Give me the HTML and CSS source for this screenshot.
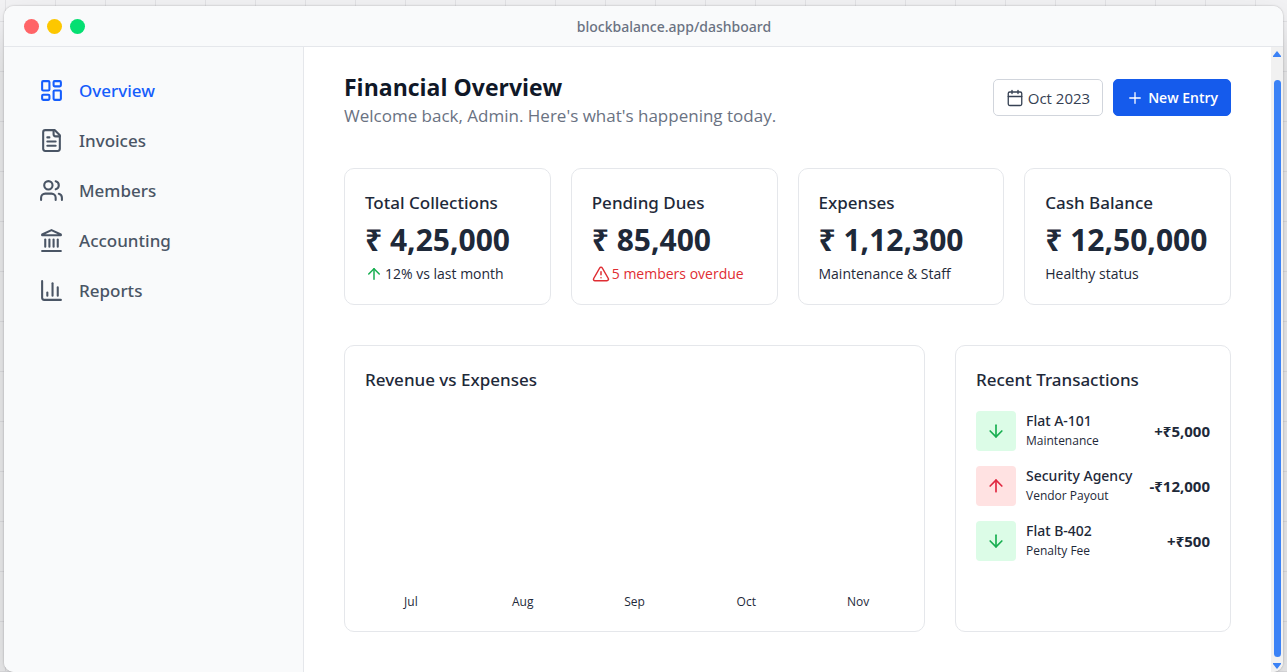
FILE: index.html
```html
<!DOCTYPE html>
<html lang="en">
<head>
  <meta charset="UTF-8">
  <title>BlockBalance - Dashboard</title>
  <meta name="viewport" content="width=device-width, initial-scale=1.0">
  <link rel="stylesheet" href="styles.css">
</head>
<body>

  <div class="window">
    <header class="titlebar">
      <div class="dots">
        <span class="dot red"></span>
        <span class="dot yellow"></span>
        <span class="dot green"></span>
      </div>
      <span class="url">blockbalance.app/dashboard</span>
    </header>

    <div class="app">
      <nav class="sidebar">
        <a href="#" class="active">
          <svg class="icon" viewBox="0 0 24 24"><rect x="3" y="3" width="7" height="9" rx="1"/><rect x="14" y="3" width="7" height="5" rx="1"/><rect x="14" y="12" width="7" height="9" rx="1"/><rect x="3" y="16" width="7" height="5" rx="1"/></svg>
          Overview
        </a>
        <a href="#">
          <svg class="icon" viewBox="0 0 24 24"><path d="M15 2H6a2 2 0 0 0-2 2v16a2 2 0 0 0 2 2h12a2 2 0 0 0 2-2V7Z"/><path d="M14 2v4a2 2 0 0 0 2 2h4"/><path d="M10 9H8"/><path d="M16 13H8"/><path d="M16 17H8"/></svg>
          Invoices
        </a>
        <a href="#">
          <svg class="icon" viewBox="0 0 24 24"><path d="M16 21v-2a4 4 0 0 0-4-4H6a4 4 0 0 0-4 4v2"/><circle cx="9" cy="7" r="4"/><path d="M22 21v-2a4 4 0 0 0-3-3.87"/><path d="M16 3.13a4 4 0 0 1 0 7.75"/></svg>
          Members
        </a>
        <a href="#">
          <svg class="icon" viewBox="0 0 24 24"><path d="M3 22h18"/><path d="M6 18v-7"/><path d="M10 18v-7"/><path d="M14 18v-7"/><path d="M18 18v-7"/><path d="M12 2 3 6.2V7h18v-.8Z"/></svg>
          Accounting
        </a>
        <a href="#">
          <svg class="icon" viewBox="0 0 24 24"><path d="M3 3v16a2 2 0 0 0 2 2h16"/><path d="M18 17V9"/><path d="M13 17V5"/><path d="M8 17v-3"/></svg>
          Reports
        </a>
      </nav>

      <main class="content">
        <div class="page-head">
          <div>
            <h1>Financial Overview</h1>
            <p>Welcome back, Admin. Here's what's happening today.</p>
          </div>
          <div class="actions">
            <button type="button" class="btn">
              <svg class="icon" viewBox="0 0 24 24"><path d="M8 2v4"/><path d="M16 2v4"/><rect x="3" y="4" width="18" height="18" rx="2"/><path d="M3 10h18"/></svg>
              Oct 2023
            </button>
            <button type="button" class="btn primary">
              <svg class="icon" viewBox="0 0 24 24"><path d="M5 12h14"/><path d="M12 5v14"/></svg>
              New Entry
            </button>
          </div>
        </div>

        <section class="stats">
          <div class="card stat">
            <h3>Total Collections</h3>
            <div class="amount">₹ 4,25,000</div>
            <p><svg class="icon up" viewBox="0 0 24 24"><path d="m5 12 7-7 7 7"/><path d="M12 19V5"/></svg>12% vs last month</p>
          </div>
          <div class="card stat">
            <h3>Pending Dues</h3>
            <div class="amount">₹ 85,400</div>
            <p class="overdue"><svg class="icon" viewBox="0 0 24 24"><path d="m21.73 18-8-14a2 2 0 0 0-3.48 0l-8 14A2 2 0 0 0 4 21h16a2 2 0 0 0 1.73-3"/><path d="M12 9v4"/><path d="M12 17h.01"/></svg>5 members overdue</p>
          </div>
          <div class="card stat">
            <h3>Expenses</h3>
            <div class="amount">₹ 1,12,300</div>
            <p>Maintenance &amp; Staff</p>
          </div>
          <div class="card stat">
            <h3>Cash Balance</h3>
            <div class="amount">₹ 12,50,000</div>
            <p>Healthy status</p>
          </div>
        </section>

        <section class="panels">
          <div class="card chart">
            <h3>Revenue vs Expenses</h3>
            <div class="months">
              <span>Jul</span>
              <span>Aug</span>
              <span>Sep</span>
              <span>Oct</span>
              <span>Nov</span>
            </div>
          </div>

          <div class="card">
            <h3>Recent Transactions</h3>
            <ul class="transactions">
              <li>
                <span class="badge in"><svg class="icon" viewBox="0 0 24 24"><path d="M12 5v14"/><path d="m19 12-7 7-7-7"/></svg></span>
                <div class="info">
                  <strong>Flat A-101</strong>
                  <small>Maintenance</small>
                </div>
                <span class="value">+₹5,000</span>
              </li>
              <li>
                <span class="badge out"><svg class="icon" viewBox="0 0 24 24"><path d="m5 12 7-7 7 7"/><path d="M12 19V5"/></svg></span>
                <div class="info">
                  <strong>Security Agency</strong>
                  <small>Vendor Payout</small>
                </div>
                <span class="value">-₹12,000</span>
              </li>
              <li>
                <span class="badge in"><svg class="icon" viewBox="0 0 24 24"><path d="M12 5v14"/><path d="m19 12-7 7-7-7"/></svg></span>
                <div class="info">
                  <strong>Flat B-402</strong>
                  <small>Penalty Fee</small>
                </div>
                <span class="value">+₹500</span>
              </li>
            </ul>
          </div>
        </section>
      </main>

      <div class="scrollbar">
        <svg class="arrow" viewBox="0 0 8 6"><path d="M4 0 8 5V6H0V5Z"/></svg>
        <div class="thumb"></div>
        <svg class="arrow" viewBox="0 0 8 6"><path d="M4 6 8 1V0H0V1Z"/></svg>
      </div>
    </div>
  </div>

</body>
</html>
```
FILE: styles.css
```css
* {
  box-sizing: border-box;
}
body {
  margin: 0;
  min-height: 100vh;
  display: flex;
  padding: 6px 4px 0;
  font-family: "Segoe UI", "Open Sans", "Noto Sans", sans-serif;
  color: #1e2939;
  background-color: #f3f3f5;
  background-image:
    linear-gradient(#e4e4e7 1px, transparent 1px),
    linear-gradient(90deg, #e4e4e7 1px, transparent 1px);
  background-size: 50px 50px;
  background-position: 5px 21px;
}
h1, h3, p, ul {
  margin: 0;
  padding: 0;
}
.icon {
  flex: none;
  width: 18px;
  height: 18px;
  fill: none;
  stroke: currentColor;
  stroke-width: 2;
  stroke-linecap: round;
  stroke-linejoin: round;
}

/* browser window */
.window {
  flex: 1;
  display: flex;
  flex-direction: column;
  background: #fff;
  border-radius: 10px;
  overflow: hidden;
  box-shadow: 0 0 2px rgba(0, 0, 0, 0.3), 0 25px 50px rgba(0, 0, 0, 0.2);
}
.titlebar {
  display: flex;
  align-items: center;
  height: 41px;
  padding: 0 20px;
  background: #f9fafb;
  border-bottom: 1px solid #e5e7eb;
}
.dots {
  display: flex;
  gap: 8px;
}
.dot {
  width: 15px;
  height: 15px;
  border-radius: 50%;
}
.red {
  background: #ff6467;
}
.yellow {
  background: #fdc700;
}
.green {
  background: #05df72;
}
.url {
  flex: 1;
  text-align: center;
  font-size: 14px;
  color: #6a7282;
}
.url,
.sidebar a,
.card h3,
.info strong {
  font-family: "Segoe UI", "Noto Sans", "Open Sans", sans-serif;
  font-weight: 500;
}
.app {
  flex: 1;
  display: flex;
}

/* sidebar */
.sidebar {
  width: 300px;
  flex: none;
  padding: 18px 35px;
  background: #f9fafb;
  border-right: 1px solid #e5e7eb;
}
.sidebar a {
  display: flex;
  align-items: center;
  gap: 15px;
  height: 50px;
  font-size: 17px;
  color: #4a5565;
  text-decoration: none;
}
.sidebar a.active {
  color: #155dfc;
}
.sidebar .icon {
  width: 25px;
  height: 25px;
}

/* main area */
.content {
  flex: 1;
  min-width: 0;
  padding: 24px 40px 40px;
}
.page-head {
  display: flex;
  justify-content: space-between;
  align-items: flex-start;
  margin-bottom: 39px;
}
.page-head h1 {
  font-size: 23px;
  line-height: 32px;
  font-weight: 700;
  color: #101828;
}
.page-head p {
  font-size: 17px;
  line-height: 26px;
  color: #6a7282;
}
.actions {
  display: flex;
  gap: 10px;
  padding-top: 8px;
}
.btn {
  display: flex;
  align-items: center;
  gap: 4px;
  height: 37px;
  padding: 0 12px;
  font: 500 15px "Segoe UI", "Open Sans", "Noto Sans", sans-serif;
  color: #364153;
  background: #fff;
  border: 1px solid #d1d5dc;
  border-radius: 5px;
  cursor: pointer;
}
.btn .icon {
  stroke-width: 1.75;
}
.btn.primary {
  font-size: 14px;
  font-weight: 600;
  color: #fff;
  background: #155bec;
  border-color: #155bec;
}
.card {
  padding: 20px;
  border: 1px solid #e5e7eb;
  border-radius: 10px;
}
.card h3 {
  font-size: 17px;
  line-height: 27px;
}
.stats {
  display: grid;
  grid-template-columns: repeat(4, 1fr);
  gap: 20px;
  margin-bottom: 40px;
}
.amount {
  font-size: 30px;
  line-height: 48px;
  font-weight: 700;
  white-space: nowrap;
}
.stat p {
  display: flex;
  align-items: center;
  gap: 2px;
  font-size: 14px;
  line-height: 20px;
  white-space: nowrap;
}
.up {
  color: #17ae50;
}
.stat .overdue {
  color: #df2d33;
}

/* chart and transactions */
.panels {
  display: grid;
  grid-template-columns: 581fr 276fr;
  gap: 30px;
}
.chart {
  display: flex;
  flex-direction: column;
  justify-content: space-between;
  min-height: 287px;
}
.months {
  display: grid;
  grid-template-columns: repeat(5, 1fr);
  gap: 20px;
  text-align: center;
  font-size: 12px;
  line-height: 18px;
}
.transactions {
  display: grid;
  gap: 15px;
  margin-top: 18px;
  list-style: none;
}
.transactions li {
  display: flex;
  align-items: center;
  gap: 10px;
}
.badge {
  display: grid;
  place-items: center;
  width: 40px;
  height: 40px;
  border-radius: 4px;
}
.badge .icon {
  width: 20px;
  height: 20px;
}
.in {
  color: #17ae50;
  background: #dcfce7;
}
.out {
  color: #e0263f;
  background: #ffe2e2;
}
.info {
  flex: 1;
}
.info strong,
.info small {
  display: block;
  line-height: 20px;
  white-space: nowrap;
}
.info strong {
  font-size: 14px;
}
.info small {
  font-size: 12px;
}
.value {
  font-size: 15px;
  font-weight: 700;
}

/* scrollbar */
.scrollbar {
  width: 12px;
  flex: none;
  display: flex;
  flex-direction: column;
  align-items: center;
  gap: 6px;
  padding: 4px 0 3px;
  background: #f1f1f1;
}
.arrow {
  width: 8px;
  height: 6px;
  fill: #3b82f6;
}
.thumb {
  flex: 1;
  width: 7px;
  margin-top: 17px;
  border-radius: 4px;
  background: #3b82f6;
}
```
